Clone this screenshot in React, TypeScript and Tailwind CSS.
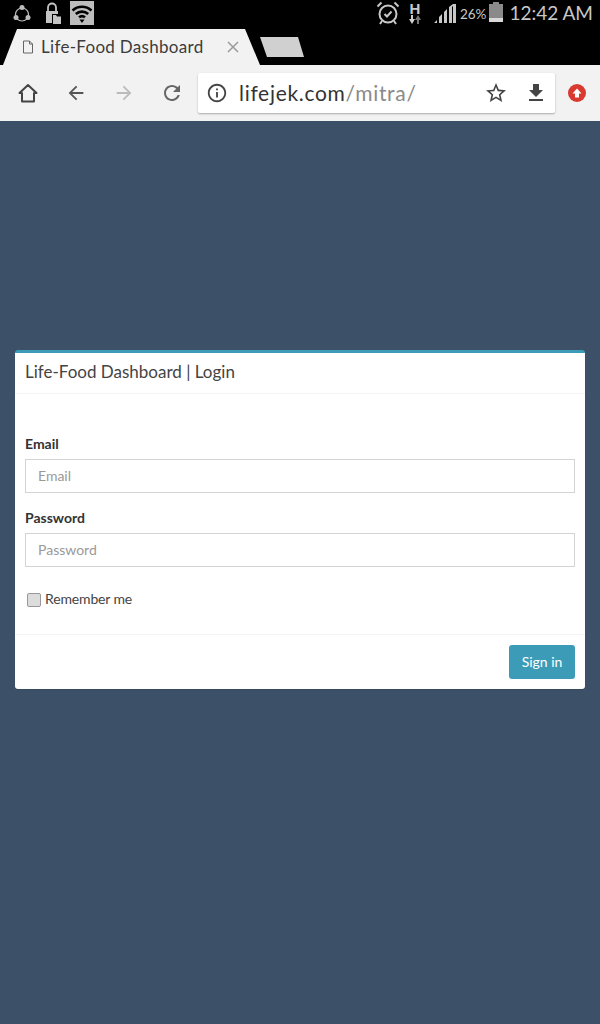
import type { ReactNode } from "react";

const handFont = "[font-family:Lato,'Noto_Sans',sans-serif]";

function Material({ d, className }: { d: string; className: string }) {
  return (
    <svg viewBox="0 0 24 24" fill="currentColor" className={className}>
      <path d={d} />
    </svg>
  );
}

function ShareIcon() {
  return (
    <svg viewBox="0 0 18 20" className="h-5 w-[18px] text-[#bdbdbd]" fill="none" stroke="currentColor">
      <circle cx="9" cy="10.500" r="6.500" strokeWidth="1.200" />
      <circle cx="9" cy="3.500" r="2.500" fill="currentColor" stroke="none" />
      <circle cx="3" cy="13.500" r="2.500" fill="currentColor" stroke="none" />
      <circle cx="15" cy="13.500" r="2.500" fill="currentColor" stroke="none" />
    </svg>
  );
}

function LockIcon() {
  return (
    <svg viewBox="0 0 16 22" className="h-[22px] w-4 text-[#c4c4c4]" fill="none">
      <path d="M3 9V5.500a4 4 0 0 1 8 0V9" stroke="currentColor" strokeWidth="1.800" />
      <path d="M1 9h12v3H7v9H1z" fill="currentColor" />
      <path d="M8 13h3l1 1.500h4V22H8z" fill="currentColor" />
    </svg>
  );
}

function WifiTile() {
  return (
    <div className="flex h-6 w-6 items-center justify-center bg-[#bdbdbd]">
      <svg viewBox="0 0 24 24" className="h-6 w-6" fill="none" stroke="#000" strokeWidth="2.600">
        <path d="M2.500 9.500c5.500-5 13.500-5 19 0M5.800 13c3.600-3.200 8.800-3.200 12.400 0M9 16.300c1.800-1.500 4.200-1.500 6 0" />
        <path d="M9.500 18.500h5L12 22z" fill="#000" stroke="none" />
      </svg>
    </div>
  );
}

function AlarmIcon() {
  return (
    <svg viewBox="0 0 24 24" className="h-6 w-6 text-[#c8c8c8]" fill="none" stroke="currentColor" strokeWidth="2">
      <circle cx="12" cy="13" r="8.500" />
      <path d="M8.500 13l2.500 2.500 4.500-5M1.500 5.500l4-4M22.500 5.500l-4-4M6 20l-2 3M18 20l2 3" />
    </svg>
  );
}

function NetworkIcon() {
  return (
    <div className="flex flex-col items-center text-[#c8c8c8]">
      <span className="text-[15px] leading-[13px] font-bold [font-family:'Liberation_Sans',sans-serif]">H</span>
      <svg viewBox="0 0 12 9" className="h-[9px] w-3">
        <path d="M2 0h2v4h2L3 9 0 4h2z" fill="#d0d0d0" />
        <path d="M8 9h2V5h2L9 0 6 5h2z" fill="#777" />
      </svg>
    </div>
  );
}

function SignalIcon() {
  return (
    <svg viewBox="0 0 22 19" className="h-[19px] w-[22px] text-[#c8c8c8]" fill="currentColor">
      <path d="M0 19l3-3v3zM5 19v-6l3-3v9zM10 19V8l3-3v14zM15 19V3l4-3h3v19h-3V2l-1 1v16z" />
    </svg>
  );
}

function BatteryIcon() {
  return (
    <div className="flex w-3.5 flex-col items-center">
      <div className="h-0.5 w-1.5 bg-[#8a8a8a]" />
      <div className="h-3.5 w-full bg-[#8a8a8a]" />
      <div className="h-1 w-full bg-[#d8d8d8]" />
    </div>
  );
}

function StatusBar() {
  return (
    <div className="flex h-[29px] shrink-0 items-start justify-between bg-black pl-[13px] pr-[7px]">
      <div className="flex items-start">
        <div className="mt-1">
          <ShareIcon />
        </div>
        <div className="ml-3.5 mt-0.5">
          <LockIcon />
        </div>
        <div className="ml-[9px] mt-px">
          <WifiTile />
        </div>
      </div>
      <div className="flex items-start">
        <div className="mt-px">
          <AlarmIcon />
        </div>
        <div className="ml-[9px] mt-0.5">
          <NetworkIcon />
        </div>
        <div className="ml-[13px] mt-1">
          <SignalIcon />
        </div>
        <span className={`ml-1 mt-1 text-[13.500px] leading-[20px] text-[#c8c8c8] ${handFont}`}>26%</span>
        <div className="ml-[3px] mt-0.5">
          <BatteryIcon />
        </div>
        <span className={`ml-1.5 mt-0.5 text-[19px] leading-[22px] text-[#c8c8c8] ${handFont}`}>12:42 AM</span>
      </div>
    </div>
  );
}

function TabStrip() {
  return (
    <div className="flex h-9 shrink-0 items-start bg-black">
      <div className="flex h-9 w-[260px] items-center bg-[#f2f2f2] pl-[22px] pr-[21px] [clip-path:polygon(3px_100%,17px_0,245px_0,260px_100%)]">
        <svg viewBox="0 0 12 14" className="h-3.5 w-3 text-[#666]" fill="none" stroke="currentColor" strokeWidth="1">
          <path d="M1.500 1h6l3 3v9h-9zM7.500 1v3h3" />
        </svg>
        <span className={`ml-[7px] flex-1 text-[17px] leading-5 tracking-[0.3px] whitespace-nowrap text-[#3c3c3c] ${handFont}`}>
          Life-Food Dashboard
        </span>
        <svg viewBox="0 0 12 12" className="h-3 w-3 text-[#9a9a9a]" fill="none" stroke="currentColor" strokeWidth="1.500">
          <path d="M1 1l10 10M11 1L1 11" />
        </svg>
      </div>
      <div className="mt-2 h-[20px] w-11 bg-[#d0d0d0] [clip-path:polygon(0_0,38px_0,44px_100%,7px_100%)]" />
    </div>
  );
}

function ToolButton({ children, className }: { children: ReactNode; className: string }) {
  return <div className={`flex shrink-0 items-center justify-center ${className}`}>{children}</div>;
}

function Toolbar() {
  return (
    <div className="flex h-14 shrink-0 items-center bg-[#f2f2f2] pl-4">
      <ToolButton className="w-6 text-[#444]">
        <svg viewBox="0 0 24 24" className="h-6 w-6" fill="none" stroke="currentColor" strokeWidth="2" strokeLinejoin="round">
          <path d="M12 4L3.500 12H6v8.500h12V12h2.500z" />
        </svg>
      </ToolButton>
      <ToolButton className="ml-6 w-6 text-[#555]">
        <Material className="h-[22px] w-[22px]" d="M20 11H7.830l5.590-5.590L12 4l-8 8 8 8 1.410-1.410L7.830 13H20v-2z" />
      </ToolButton>
      <ToolButton className="ml-6 w-6 text-[#bbb]">
        <Material className="h-[22px] w-[22px]" d="M4 11h12.170l-5.590-5.590L12 4l8 8-8 8-1.410-1.410L16.170 13H4v-2z" />
      </ToolButton>
      <ToolButton className="ml-6 w-6 text-[#666]">
        <Material
          className="h-6 w-6"
          d="M17.650 6.350C16.200 4.900 14.210 4 12 4c-4.420 0-7.990 3.580-7.990 8s3.570 8 7.990 8c3.730 0 6.840-2.550 7.730-6h-2.080c-.82 2.330-3.040 4-5.650 4-3.310 0-6-2.690-6-6s2.690-6 6-6c1.660 0 3.140.69 4.220 1.780L13 11h7V4l-2.350 2.350z"
        />
      </ToolButton>
      <div className="ml-3.5 flex h-10 w-[357px] shrink-0 items-center rounded-[2px] bg-white pl-2 pr-[7px] shadow-[0_1px_2px_rgba(0,0,0,0.3)]">
        <Material
          className="h-[22px] w-[22px] text-[#444]"
          d="M11 7h2v2h-2zm0 4h2v6h-2zm1-9C6.480 2 2 6.480 2 12s4.480 10 10 10 10-4.480 10-10S17.520 2 12 2zm0 18c-4.410 0-8-3.590-8-8s3.590-8 8-8 8 3.590 8 8-3.590 8-8 8z"
        />
        <span className={`ml-[11px] flex-1 text-[21px] leading-6 tracking-[0.7px] whitespace-nowrap text-[#333] ${handFont}`}>
          lifejek.com<span className="text-[#8a8a8a]">/mitra/</span>
        </span>
        <Material
          className="h-6 w-6 text-[#444]"
          d="M22 9.240l-7.190-.62L12 2 9.190 8.630 2 9.240l5.460 4.730L5.820 21 12 17.270 18.180 21l-1.630-7.030L22 9.240zM12 15.400l-3.760 2.270 1-4.280-3.320-2.880 4.380-.38L12 6.100l1.710 4.040 4.380.38-3.320 2.880 1 4.280L12 15.400z"
        />
        <Material className="ml-4 h-6 w-6 text-[#444]" d="M19 9h-4V3H9v6H5l7 7 7-7zM5 18v2h14v-2H5z" />
      </div>
      <div className="ml-[13px] flex h-[18px] w-[18px] shrink-0 items-center justify-center rounded-full bg-[#d93a2f]">
        <svg viewBox="0 0 10 10" className="h-2.5 w-2.5" fill="#fff">
          <path d="M5 0.500L9.500 5.500H7V9.500H3V5.500H0.500z" />
        </svg>
      </div>
    </div>
  );
}

function Field({ label }: { label: string }) {
  return (
    <div className="mb-[15px]">
      <label className="mb-[5px] block text-sm leading-5 font-bold text-[#333]">{label}</label>
      <input
        placeholder={label}
        className="block h-[34px] w-full border border-[#d4d4d4] bg-white px-3 pb-0.5 text-sm text-[#555] outline-none placeholder:text-[#999]"
      />
    </div>
  );
}

function LoginCard() {
  return (
    <div className="rounded-[3px] border-t-[3px] border-[#3c9cb8] bg-white shadow-[0_1px_1px_rgba(0,0,0,0.1)] [font-family:Lato,sans-serif]">
      <div className="flex h-[41px] items-center border-b border-[#f4f4f4] px-2.5">
        <h3 className="mt-[-3px] text-[17px] leading-[18px] text-[#444]">Life-Food Dashboard | Login</h3>
      </div>
      <div className="px-2.5 pt-10">
        <Field label="Email" />
        <Field label="Password" />
        <label className="flex h-[52px] items-start pl-[2px] pt-[7px] text-sm leading-5 tracking-[-0.15px] text-[#444]">
          <input
            type="checkbox"
            className="mt-1 mr-[4px] h-3.5 w-3.5 shrink-0 appearance-none rounded-[2px] border border-[#999] bg-[#dcdcdc]"
          />
          Remember me
        </label>
      </div>
      <div className="flex h-[55px] justify-end border-t border-[#f4f4f4] px-2.5 pt-2.5">
        <button className="h-[34px] w-[66px] rounded-[3px] bg-[#3c9cb8] text-sm text-white">Sign in</button>
      </div>
    </div>
  );
}

export default function App() {
  return (
    <div className="flex h-[1024px] w-[600px] flex-col overflow-hidden bg-black">
      <StatusBar />
      <TabStrip />
      <Toolbar />
      <main className="flex-1 bg-[#3c5167] px-[15px] pt-[229px]">
        <LoginCard />
      </main>
    </div>
  );
}
